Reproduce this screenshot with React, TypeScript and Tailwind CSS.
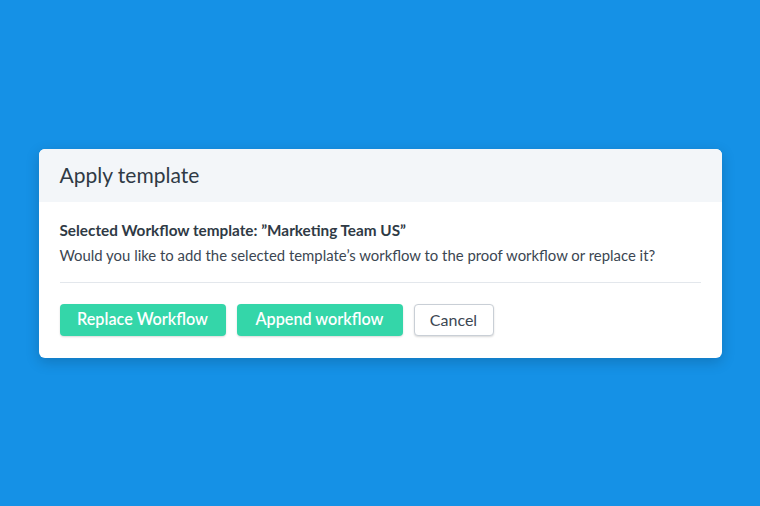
export default function App() {
  return (
    <main className="min-h-screen w-full flex items-center justify-center bg-[#1591e6] font-['Lato','Open_Sans',sans-serif]">
      <div className="w-[683px] bg-white rounded-md shadow-[0_4px_14px_rgba(0,0,0,0.18)] overflow-hidden">
        {/* Header */}
        <div className="h-[53px] bg-[#f3f6f9] flex items-center px-[21px]">
          <h1 className="text-[21px] text-[#2f3a45]">Apply template</h1>
        </div>

        {/* Body */}
        <div className="px-[21px] pt-[18px]">
          <p className="text-[15.3px] font-bold text-[#2f3a45] leading-[20px]">
            Selected Workflow template: ”Marketing Team US”
          </p>
          <p className="text-[14.9px] text-[#3b4652] leading-[20px] mt-[5px]">
            Would you like to add the selected template’s workflow to the proof workflow or replace it?
          </p>
          <div className="h-px bg-[#e3e7ec] mt-[17px]" />

          {/* Actions */}
          <div className="flex items-center gap-[11px] pt-[21px] pb-[22px]">
            <button className="w-[166px] h-[32px] rounded bg-[#34d6a9] text-white text-[16.2px] font-semibold shadow-[0_1px_2px_rgba(0,0,0,0.15)]">
              Replace Workflow
            </button>
            <button className="w-[166px] h-[32px] rounded bg-[#34d6a9] text-white text-[16.2px] font-semibold shadow-[0_1px_2px_rgba(0,0,0,0.15)]">
              Append workflow
            </button>
            <button className="w-[80px] h-[32px] rounded border border-[#c9cfd6] bg-white text-[#3b4652] text-[16px] shadow-[0_1px_2px_rgba(0,0,0,0.15)]">
              Cancel
            </button>
          </div>
        </div>
      </div>
    </main>
  )
}
